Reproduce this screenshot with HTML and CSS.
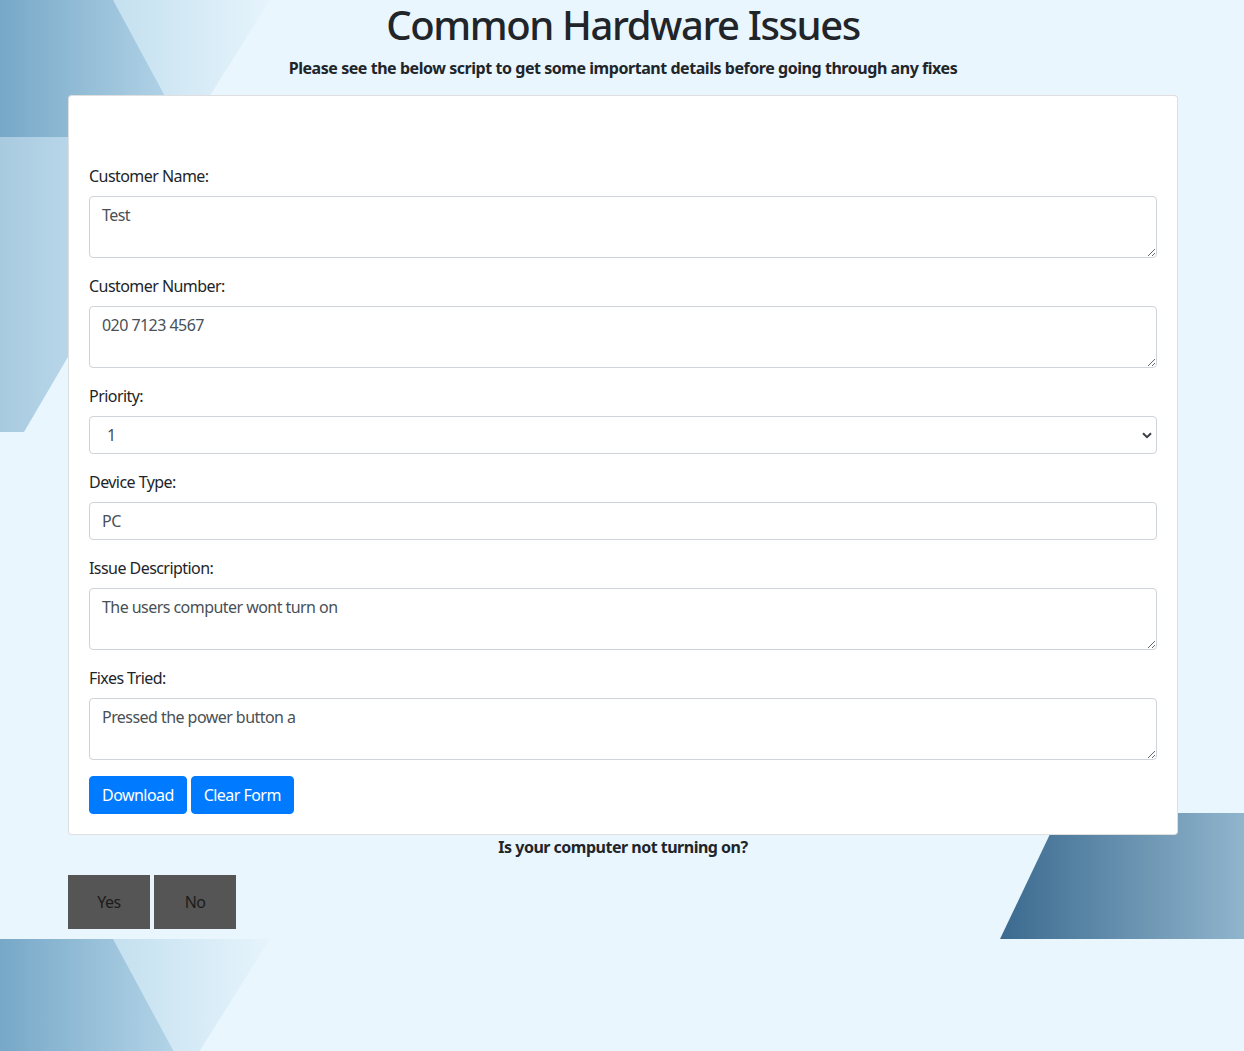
FILE: index.html
```html
<!DOCTYPE html>
<html lang="en">
<head>
<meta charset="utf-8">
<title>Common Hardware Issues</title>
<link rel="stylesheet" href="styles.css">
</head>
<body>
<div class="backdrop" aria-hidden="true">
  <svg class="tile" width="1244" height="939" viewBox="0 0 1244 939">
    <defs>
      <linearGradient id="gA" x1="0" y1="0" x2="1" y2="0">
        <stop offset="0" stop-color="#77a8c7"/>
        <stop offset="1" stop-color="#b7d7ea"/>
      </linearGradient>
      <linearGradient id="gB" x1="0" y1="0" x2="1" y2="0">
        <stop offset="0" stop-color="#b3d4e8"/>
        <stop offset="0.45" stop-color="#c6e1f0"/>
        <stop offset="1" stop-color="#e6f4fc"/>
      </linearGradient>
      <linearGradient id="gBand" x1="0" y1="0" x2="1" y2="0">
        <stop offset="0" stop-color="#a8cadf"/>
        <stop offset="1" stop-color="#c3dff0"/>
      </linearGradient>
      <linearGradient id="gBR" x1="0" y1="0" x2="1" y2="0">
        <stop offset="0" stop-color="#3b6a8f"/>
        <stop offset="1" stop-color="#90b5cd"/>
      </linearGradient>
    </defs>
    <polygon points="0,0 270,0 184,137 0,137" fill="url(#gB)"/>
    <polygon points="0,0 113,0 187,137 0,137" fill="url(#gA)"/>
    <polygon points="0,137 120,137 120,268 24,432 0,432" fill="url(#gBand)"/>
    <polygon points="1060,813 1244,813 1244,939 1000,939" fill="url(#gBR)"/>
  </svg>
  <svg class="tile" width="1244" height="939" viewBox="0 0 1244 939">
    <polygon points="0,0 270,0 184,137 0,137" fill="url(#gB)"/>
    <polygon points="0,0 113,0 187,137 0,137" fill="url(#gA)"/>
    <polygon points="0,137 120,137 120,268 24,432 0,432" fill="url(#gBand)"/>
    <polygon points="1060,813 1244,813 1244,939 1000,939" fill="url(#gBR)"/>
  </svg>
</div>

<main class="container">
  <h1 class="title">Common Hardware Issues</h1>
  <p class="intro">Please see the below script to get some important details before going through any fixes</p>

  <div class="card">
    <form class="card-body">
      <div class="card-spacer"></div>
      <div class="form-group">
        <label class="form-label" for="name">Customer Name:</label>
        <textarea class="form-control area" id="name" rows="2">Test</textarea>
      </div>
      <div class="form-group">
        <label class="form-label" for="number">Customer Number:</label>
        <textarea class="form-control area" id="number" rows="2">020 7123 4567</textarea>
      </div>
      <div class="form-group">
        <label class="form-label" for="priority">Priority:</label>
        <div class="select-wrap">
          <select class="form-control select" id="priority">
            <option>1</option>
            <option>2</option>
            <option>3</option>
          </select>
          <svg class="chevron" width="10" height="7" viewBox="0 0 10 7"><path d="M1 1.2 L5 5.2 L9 1.2" fill="none" stroke="#3b3f44" stroke-width="2"/></svg>
        </div>
      </div>
      <div class="form-group">
        <label class="form-label" for="device">Device Type:</label>
        <input class="form-control input" id="device" type="text" value="PC">
      </div>
      <div class="form-group">
        <label class="form-label" for="issue">Issue Description:</label>
        <textarea class="form-control area" id="issue" rows="2">The users computer wont turn on</textarea>
      </div>
      <div class="form-group">
        <label class="form-label" for="fixes">Fixes Tried:</label>
        <textarea class="form-control area" id="fixes" rows="2">Pressed the power button a</textarea>
      </div>
      <div class="actions">
        <button type="button" class="btn btn-primary">Download</button>
        <button type="button" class="btn btn-primary">Clear Form</button>
      </div>
    </form>
  </div>

  <p class="question">Is your computer not turning on?</p>
  <div class="answers">
    <button type="button" class="answer">Yes</button>
    <button type="button" class="answer">No</button>
  </div>
</main>
</body>
</html>
```

FILE: styles.css
```css
* {
  box-sizing: border-box;
}

html, body {
  margin: 0;
  padding: 0;
}

body {
  position: relative;
  min-height: 1051px;
  background: #e9f6fe;
  color: #212529;
  font-family: "Noto Sans", "Open Sans", "DejaVu Sans", sans-serif;
  font-size: 16px;
  line-height: 1.5;
  letter-spacing: -0.55px;
}

.backdrop {
  position: absolute;
  top: 0;
  left: 0;
  width: 100%;
  height: 1051px;
  overflow: hidden;
  z-index: 0;
}

.tile {
  display: block;
}

.container {
  position: relative;
  z-index: 1;
  width: 1110px;
  margin: 0 0 0 calc(50% - 554px);
}

.title {
  margin: 0 0 8px;
  padding-top: 1px;
  font-size: 40px;
  font-weight: 500;
  line-height: 47px;
  text-align: center;
  letter-spacing: -1.4px;
}

.intro {
  margin: 0 0 15px;
  font-size: 16px;
  font-weight: 700;
  line-height: 24px;
  text-align: center;
  letter-spacing: -0.45px;
}

.card {
  background: #fff;
  border: 1px solid rgba(0, 0, 0, 0.125);
  border-radius: 4px;
}

.card-body {
  display: flex;
  flex-direction: column;
  padding: 20px;
}

.card-spacer {
  height: 48px;
}

.form-group {
  display: flex;
  flex-direction: column;
  margin-bottom: 16px;
}

.form-label {
  margin-bottom: 8px;
  line-height: 24px;
}

.form-control {
  display: block;
  width: 100%;
  padding: 6px 12px;
  font-family: inherit;
  font-size: 16px;
  line-height: 24px;
  letter-spacing: -0.55px;
  color: #495057;
  background: #fff;
  border: 1px solid #ced4da;
  border-radius: 4px;
}

.area {
  height: 62px;
  resize: vertical;
}

.input {
  height: 38px;
}

.select-wrap {
  position: relative;
}

.select {
  height: 38px;
  padding-left: 17px;
  -webkit-appearance: none;
  appearance: none;
}

.chevron {
  position: absolute;
  right: 5px;
  top: 16px;
  pointer-events: none;
}

.actions {
  display: flex;
  gap: 4px;
}

.btn {
  height: 38px;
  padding: 6px 12px;
  font-family: inherit;
  font-size: 16px;
  line-height: 24px;
  letter-spacing: -0.55px;
  border: 1px solid transparent;
  border-radius: 4px;
  cursor: pointer;
}

.btn-primary {
  color: #fff;
  background: #007bff;
  border-color: #007bff;
}

.question {
  margin: 0 0 16px;
  font-weight: 700;
  line-height: 24px;
  text-align: center;
  letter-spacing: -0.5px;
}

.answers {
  display: flex;
  gap: 4px;
  padding-bottom: 10px;
}

.answer {
  width: 82px;
  height: 54px;
  padding: 0;
  font-family: inherit;
  font-size: 16px;
  letter-spacing: -0.55px;
  color: #1c1c1c;
  background: #555;
  border: none;
  cursor: pointer;
}
```
